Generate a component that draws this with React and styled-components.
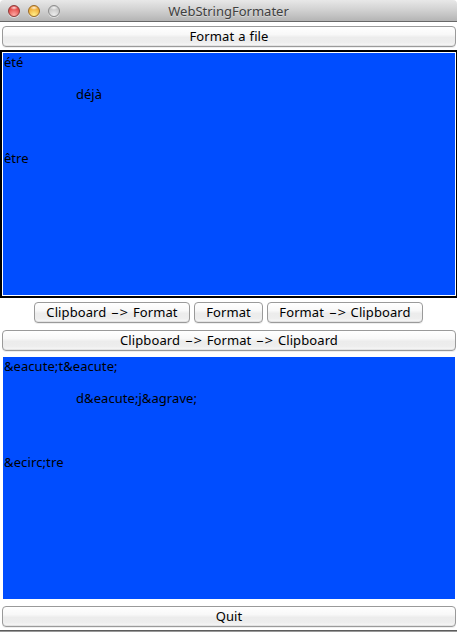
import React from "react";
import styled, { createGlobalStyle } from "styled-components";

const GlobalStyle = createGlobalStyle`
  * { box-sizing: border-box; }
  body { margin: 0; background: #fff; overflow: hidden; }
`;

const Window = styled.div`
  width: 457px;
  height: 632px;
  display: flex;
  flex-direction: column;
  background: #fff;
  border-radius: 4px 4px 0 0;
  overflow: hidden;
  font-family: "Noto Sans", "Open Sans", sans-serif;
  font-size: 13px;
  line-height: 16px;
  color: #000;
`;

const TitleBar = styled.header`
  height: 22px;
  flex: none;
  display: grid;
  grid-template-columns: 62px 1fr 62px;
  align-items: center;
  background: linear-gradient(#e8e8e8, #d0d0d0 50%, #b4b4b4);
  border-bottom: 1px solid #686868;
`;

const Lights = styled.div`
  display: flex;
  gap: 8px;
  padding-left: 8px;
`;

const Light = styled.span`
  width: 12px;
  height: 12px;
  border-radius: 50%;
  border: 1px solid ${(p) => p.$edge};
  background:
    radial-gradient(ellipse 4px 2px at 50% 18%, rgba(255, 255, 255, 0.85), transparent),
    radial-gradient(circle at 50% 90%, ${(p) => p.$glow}, ${(p) => p.$fill} 75%);
  box-shadow: 0 1px 0 rgba(255, 255, 255, 0.5);
`;

const Title = styled.h1`
  margin: 0;
  font-size: 13px;
  font-weight: 400;
  line-height: 16px;
  text-align: center;
  color: #404040;
  text-shadow: 0 1px 0 rgba(255, 255, 255, 0.4);
`;

const Content = styled.main`
  flex: 1;
  display: flex;
  flex-direction: column;
  padding-top: 4px;
`;

const Button = styled.button`
  height: 21px;
  flex: none;
  width: ${(p) => (p.$width ? `${p.$width}px` : "auto")};
  margin: ${(p) => (p.$width ? "0" : "0 1px 0 2px")};
  padding: 0 0 1px;
  border: 1px solid #9a9a9a;
  border-radius: 4px;
  background: linear-gradient(#fff, #f8f8f8 40%, #ececec 55%, #ededed 80%, #f8f8f8);
  box-shadow: inset 0 -1px 0 rgba(150, 150, 150, 0.2), 0 1px 0 #eee;
  color: #000;
  font: inherit;
  letter-spacing: 0.1px;
  word-spacing: ${(p) => p.$wordGap || 0}px;
  white-space: nowrap;
`;

const Dash = styled.span`
  display: inline-block;
  width: 8px;
  margin: 0 1px 0 0;
  text-align: center;
  transform: scaleX(1.9);
`;

const Head = styled.span`
  display: inline-block;
  transform: scaleX(1.15);
  margin-right: 1px;
`;

const Arrow = () => (
  <>
    {" "}
    <Dash>-</Dash>
    <Head>&gt;</Head>{" "}
  </>
);

const ButtonRow = styled.div`
  display: flex;
  justify-content: center;
  gap: 4px;
  margin: 4px 0 7px;
`;

const FocusFrame = styled.section`
  height: 248px;
  margin-top: 3px;
  padding: 1px;
  border: 2px solid #000;
  border-right-width: 1px;
  display: flex;
`;

const PlainFrame = styled.section`
  height: 242px;
  margin: 6px 2px 7px 3px;
  display: flex;
`;

const TextPane = styled.div`
  flex: 1;
  padding: 1px;
  background: #004dff;
  white-space: pre;
`;

const Line = styled.div`
  height: 16px;
  padding-left: ${(p) => (p.$tab ? "72px" : "0")};
  letter-spacing: ${(p) => p.$spacing || 0}px;
`;

const BottomEdge = styled.footer`
  height: 2px;
  flex: none;
  background: linear-gradient(#5c5c5c 50%, #999 50%);
`;

export default function App() {
  return (
    <>
      <GlobalStyle />
      <Window>
        <TitleBar>
          <Lights>
            <Light $edge="#8f3a38" $fill="#e0403d" $glow="#ffaaa5" />
            <Light $edge="#9a6a25" $fill="#eea52f" $glow="#fff08a" />
            <Light $edge="#8c8c8c" $fill="#c2c2c2" $glow="#ededed" />
          </Lights>
          <Title>WebStringFormater</Title>
        </TitleBar>
        <Content>
          <Button $wordGap={0.5}>Format a file</Button>
          <FocusFrame>
            <TextPane>
              <Line>été</Line>
              <Line />
              <Line $tab>déjà</Line>
              <Line />
              <Line />
              <Line />
              <Line>être</Line>
            </TextPane>
          </FocusFrame>
          <ButtonRow>
            <Button $width={156} $wordGap={1}>Clipboard<Arrow />Format</Button>
            <Button $width={69}>Format</Button>
            <Button $width={156} $wordGap={1}>Format<Arrow />Clipboard</Button>
          </ButtonRow>
          <Button $wordGap={1}>Clipboard<Arrow />Format<Arrow />Clipboard</Button>
          <PlainFrame>
            <TextPane>
              <Line $spacing={0.06}>{"&eacute;t&eacute;"}</Line>
              <Line />
              <Line $tab $spacing={0.06}>{"d&eacute;j&agrave;"}</Line>
              <Line />
              <Line />
              <Line />
              <Line $spacing={0.12}>{"&ecirc;tre"}</Line>
            </TextPane>
          </PlainFrame>
          <Button>Quit</Button>
        </Content>
        <BottomEdge />
      </Window>
    </>
  );
}
